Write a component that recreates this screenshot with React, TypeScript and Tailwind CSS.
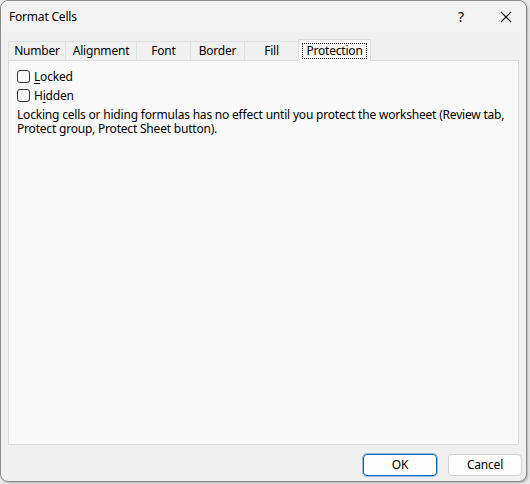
import { useState } from "react";

const tabs = ["Number", "Alignment", "Font", "Border", "Fill", "Protection"];
const tabWidths = ["w-[57px]", "w-[71px]", "w-[54px]", "w-[54px]", "w-[54px]", "w-[73px]"];

function Check({ label, u, checked, onChange }: { label: string; u: number; checked: boolean; onChange: () => void }) {
  return (
    <label className="flex h-[19px] items-center gap-[4px]" onClick={onChange}>
      <span className="flex h-[13px] w-[13px] items-center justify-center rounded-[3px] border border-[#333] bg-[#f9f9f9]">
        {checked && (
          <svg width="9" height="9" viewBox="0 0 9 9">
            <path d="M1 4.5 L3.5 7 L8 1.5" fill="none" stroke="#000" strokeWidth="1.2" />
          </svg>
        )}
      </span>
      <span>
        {label.slice(0, u)}
        <span className="underline underline-offset-2">{label[u]}</span>
        {label.slice(u + 1)}
      </span>
    </label>
  );
}

export default function App() {
  const [locked, setLocked] = useState(false);
  const [hidden, setHidden] = useState(false);

  return (
    <div className="h-[484px] w-[530px] overflow-hidden bg-[#e9e9e9] text-[12px] tracking-[-0.2px] text-black [font-family:'Noto_Sans',sans-serif]">
      <div className="flex h-[482px] w-[527px] flex-col rounded-lg border border-[#8c8c8c] bg-[#f0f0f0] shadow-[1px_1px_2px_rgba(0,0,0,0.25)]">
        {/* title bar */}
        <div className="flex h-[31px] items-center rounded-t-lg bg-[#f3f3f3] pl-[8px]">
          <span className="flex-1 text-[12px]">Format Cells</span>
          <span className="w-[50px] text-center text-[14px] leading-none">?</span>
          <span className="flex w-[40px] items-center justify-center">
            <svg width="12" height="12" viewBox="0 0 12 12">
              <path d="M1 1 L11 11 M11 1 L1 11" stroke="#111" strokeWidth="1.1" />
            </svg>
          </span>
        </div>

        {/* tabs */}
        <div className="mt-[7px] flex h-[21px] items-end px-[7px]">
          {tabs.map((t, i) =>
            t === "Protection" ? (
              <div
                key={t}
                className={`${tabWidths[i]} relative z-10 -mb-px flex h-[22px] items-center justify-center border border-b-0 border-[#dcdcdc] bg-[#f9f9f9]`}
              >
                <span className="border border-dotted border-black px-[3px] leading-[14px]">{t}</span>
              </div>
            ) : (
              <div
                key={t}
                className={`${tabWidths[i]} flex h-[19px] items-center justify-center border border-b-0 border-r-0 border-[#e0e0e0] bg-[#f0f0f0]`}
              >
                {t}
              </div>
            )
          )}
        </div>

        {/* panel */}
        <div className="mx-[7px] flex h-[385px] flex-col border border-[#dcdcdc] bg-[#f9f9f9] px-[8px] pt-[6px]">
          <Check label="Locked" u={0} checked={locked} onChange={() => setLocked(!locked)} />
          <Check label="Hidden" u={1} checked={hidden} onChange={() => setHidden(!hidden)} />
          <p className="mt-[3px] leading-[14px]">
            Locking cells or hiding formulas has no effect until you protect the worksheet (Review tab, Protect group,
            Protect Sheet button).
          </p>
        </div>

        {/* buttons */}
        <div className="mt-[9px] flex justify-end gap-[11px] pr-[4px]">
          <button className="h-[22px] w-[74px] rounded-[4px] border border-[#0067c0] bg-[#fdfdfd] outline outline-1 outline-[#0067c0]/40">
            OK
          </button>
          <button className="h-[22px] w-[74px] rounded-[4px] border border-[#d0d0d0] bg-[#fdfdfd]">Cancel</button>
        </div>
      </div>
    </div>
  );
}
